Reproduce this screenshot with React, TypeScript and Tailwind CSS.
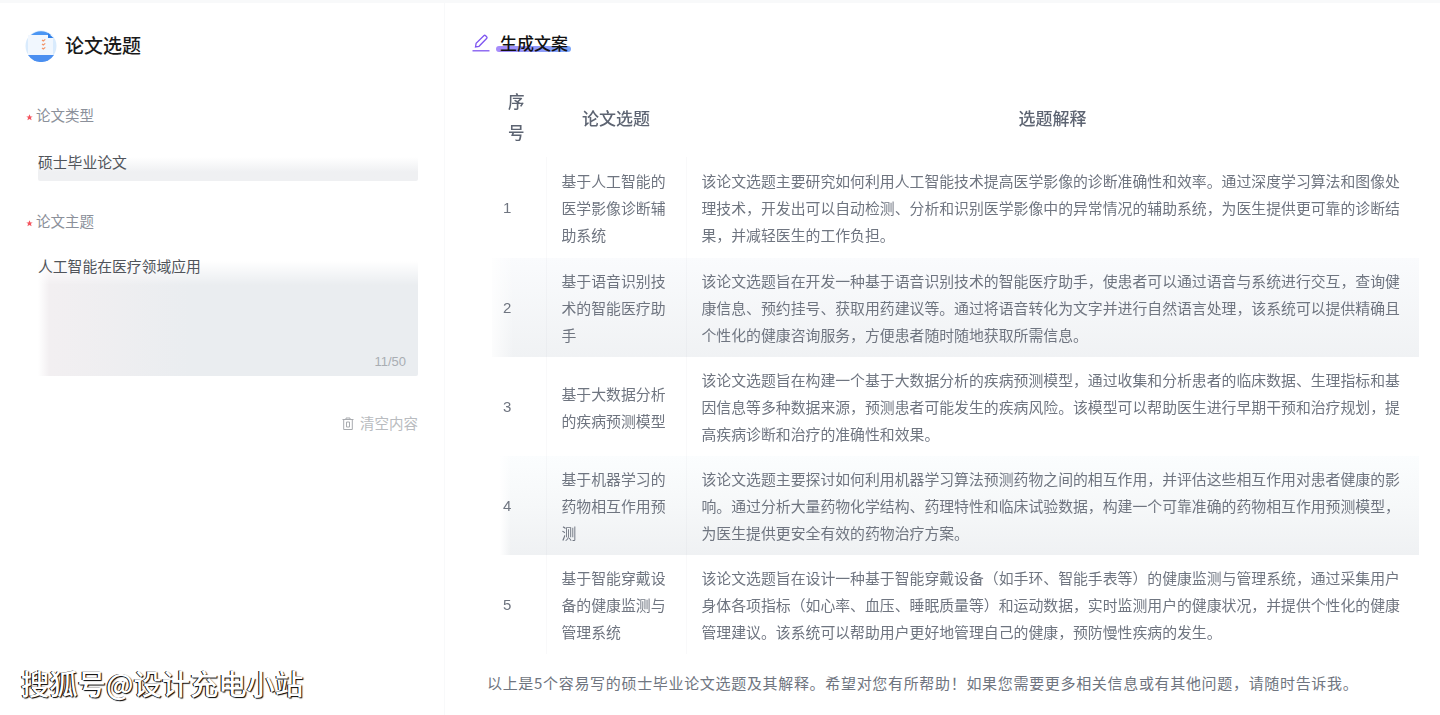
const rows = [
  {
    no: '1',
    title: '基于人工智能的医学影像诊断辅助系统',
    desc: '该论文选题主要研究如何利用人工智能技术提高医学影像的诊断准确性和效率。通过深度学习算法和图像处理技术，开发出可以自动检测、分析和识别医学影像中的异常情况的辅助系统，为医生提供更可靠的诊断结果，并减轻医生的工作负担。',
    rowClass: 'h-[101px]',
    noClass: '',
  },
  {
    no: '2',
    title: '基于语音识别技术的智能医疗助手',
    desc: '该论文选题旨在开发一种基于语音识别技术的智能医疗助手，使患者可以通过语音与系统进行交互，查询健康信息、预约挂号、获取用药建议等。通过将语音转化为文字并进行自然语言处理，该系统可以提供精确且个性化的健康咨询服务，方便患者随时随地获取所需信息。',
    rowClass: 'h-[99px] bg-linear-to-b from-[#fafbfd] to-[#f0f2f4]',
    noClass: 'bg-linear-to-r from-white/80 to-transparent to-40%',
  },
  {
    no: '3',
    title: '基于大数据分析的疾病预测模型',
    desc: '该论文选题旨在构建一个基于大数据分析的疾病预测模型，通过收集和分析患者的临床数据、生理指标和基因信息等多种数据来源，预测患者可能发生的疾病风险。该模型可以帮助医生进行早期干预和治疗规划，提高疾病诊断和治疗的准确性和效果。',
    rowClass: 'h-[99px]',
    noClass: '',
  },
  {
    no: '4',
    title: '基于机器学习的药物相互作用预测',
    desc: '该论文选题主要探讨如何利用机器学习算法预测药物之间的相互作用，并评估这些相互作用对患者健康的影响。通过分析大量药物化学结构、药理特性和临床试验数据，构建一个可靠准确的药物相互作用预测模型，为医生提供更安全有效的药物治疗方案。',
    rowClass: 'h-[99px] bg-linear-to-b from-[#fbfdfe] via-[#f6f8f9] to-[#eff1f3]',
    noClass: 'bg-linear-to-r from-white from-15% to-transparent to-35%',
  },
  {
    no: '5',
    title: '基于智能穿戴设备的健康监测与管理系统',
    desc: '该论文选题旨在设计一种基于智能穿戴设备（如手环、智能手表等）的健康监测与管理系统，通过采集用户身体各项指标（如心率、血压、睡眠质量等）和运动数据，实时监测用户的健康状况，并提供个性化的健康管理建议。该系统可以帮助用户更好地管理自己的健康，预防慢性疾病的发生。',
    rowClass: 'h-[99px]',
    noClass: '',
  },
];

function Star() {
  return (
    <svg viewBox="0 0 10 10" className="mt-[5px] mr-[3px] h-[7px] w-[7px] shrink-0" aria-hidden="true">
      <path
        fill="#f4555f"
        d="M5 0.4l1.4 3h3.2L7 5.5l1 3.5-3-1.9L2 9l1-3.5L0.4 3.4h3.2z"
      />
    </svg>
  );
}

function Logo() {
  return (
    <svg viewBox="0 0 32 32" className="-ml-[1px] h-[32px] w-[32px] shrink-0" aria-hidden="true">
      <circle cx="16" cy="16" r="15.5" fill="#d9ebfd" />
      <path d="M6 5a15 15 0 0 1 20 0z" fill="#4b96f3" />
      <path d="M3 25h26a15.5 15.5 0 0 1-26 0z" fill="#4b8ff0" />
      <rect x="3" y="5" width="25" height="20" fill="#f1f7fe" />
      <path d="M23 3l5.5 5H23z" fill="#2f7fe8" />
      <path
        d="M17 10l1.3 1 2-1.6M17 14l1.3 1 2-1.6M17 18l1.3 1 2-1.6"
        fill="none"
        stroke="#f39468"
        strokeWidth="1.2"
      />
    </svg>
  );
}

export default function App() {
  return (
    <div className="relative h-[715px] w-[1440px] overflow-hidden bg-white font-['Noto_Sans_CJK_SC',sans-serif]">
      <div className="h-[3px] bg-[#f8f9fa]" />
      <div className="flex h-[712px]">
        {/* Left form */}
        <aside className="w-[445px] shrink-0 border-r border-[#f8f9fa] px-[26px]">
          <div className="flex h-[54px] items-center gap-[8px] pt-[32px]">
            <Logo />
            <h1 className="pb-[2px] text-[19px] leading-[26px] font-medium text-[#1a1a1a]">论文选题</h1>
          </div>

          <div className="mt-[47px] flex items-center">
            <Star />
            <span className="text-[14.5px] leading-[22px] text-[#8b909a]">论文类型</span>
          </div>
          <div className="mt-[25px] ml-[12px] h-[30px] rounded-[2px] bg-linear-to-b from-white from-20% to-[#eff0f2] to-70% text-[14.8px] leading-[22px] text-[#50545a]">
            硕士毕业论文
          </div>

          <div className="mt-[29px] flex items-center">
            <Star />
            <span className="text-[14.5px] leading-[22px] text-[#8b909a]">论文主题</span>
          </div>
          <div className="relative mt-[23px] ml-[12px] h-[121px] rounded-[2px] bg-[linear-gradient(to_bottom,white_5%,transparent_25%),linear-gradient(to_right,white,#f2eff1_3%,#eaedf0_40%)] text-[14.8px] leading-[22px] text-[#50545a]">
            人工智能在医疗领域应用
            <span className="absolute right-[12px] bottom-[5px] font-['Liberation_Sans',sans-serif] text-[13px] leading-[18px] text-[#a9adb3]">
              11/50
            </span>
          </div>

          <div className="mt-[36px] flex items-center justify-end gap-[6px] text-[14.5px] leading-[22px] text-[#b9bcc0]">
            <svg
              viewBox="0 0 12 13"
              className="h-[13px] w-[12px]"
              fill="none"
              stroke="#a8abaf"
              strokeWidth="1"
              aria-hidden="true"
            >
              <path d="M0.5 2.5h11M4 2.5V1h4v1.5M1.7 2.5v10h8.6v-10M4.5 5v5h3V5z" />
            </svg>
            清空内容
          </div>
        </aside>

        {/* Generated result */}
        <main className="flex-1 pl-[27px]">
          <div className="flex items-center pt-[30px]">
            <svg
              viewBox="0 0 18 18"
              className="h-[18px] w-[18px]"
              fill="none"
              stroke="#7f56f0"
              strokeWidth="1.3"
              aria-hidden="true"
            >
              <path d="M3.5 13l0.6-3.6L11.8 1.7a1.3 1.3 0 0 1 1.8 0l1 1a1.3 1.3 0 0 1 0 1.8L7 12.3z" />
              <path d="M0.5 16.8h17" />
            </svg>
            <h2 className="relative ml-[10px] text-[17px] leading-[20px] font-medium text-[#111]">
              <span className="absolute -right-[3px] bottom-[1px] -left-[4px] h-[6px] rounded-full bg-linear-to-r from-[#a78bfa] to-[#7aa5f8] blur-[0.5px]" />
              <span className="relative">生成文案</span>
            </h2>
          </div>

          <table className="mt-[25px] ml-[20px] w-[927px] table-fixed border-collapse will-change-transform">
            <colgroup>
              <col className="w-[54px]" />
              <col className="w-[140px]" />
              <col />
            </colgroup>
            <thead>
              <tr className="h-[79px] text-[17px] leading-[31px] font-medium text-[#5d6472]">
                <th className="pr-[22px] pb-[2px] pl-[16px] text-[16.5px] font-medium">序号</th>
                <th className="font-medium">论文选题</th>
                <th className="font-medium">选题解释</th>
              </tr>
            </thead>
            <tbody className="text-[14.87px] leading-[27px] text-[#6f7580]">
              {rows.map((row) => (
                <tr key={row.no} className={row.rowClass}>
                  <td className={`border-r border-[#8090a0]/[0.05] pl-[11px] font-['Liberation_Sans',sans-serif] text-[15px] ${row.noClass}`}>{row.no}</td>
                  <td className="border-r border-[#8090a0]/[0.05] px-[15px]">{row.title}</td>
                  <td className="pr-[10px] pl-[15px]">{row.desc}</td>
                </tr>
              ))}
            </tbody>
          </table>

          <p className="mt-[15px] ml-[15px] text-[15px] leading-[27px] tracking-[0.68px] text-[#6f7580]">
            以上是5个容易写的硕士毕业论文选题及其解释。希望对您有所帮助！如果您需要更多相关信息或有其他问题，请随时告诉我。
          </p>
        </main>
      </div>

      {/* Watermark */}
      <div className="absolute top-[663px] left-[21px] text-[28.3px] leading-[40px] font-medium text-white [text-shadow:1px_1px_1px_#000,-1px_0_0_#000]">
        搜狐号@设计充电小站
      </div>
    </div>
  );
}
